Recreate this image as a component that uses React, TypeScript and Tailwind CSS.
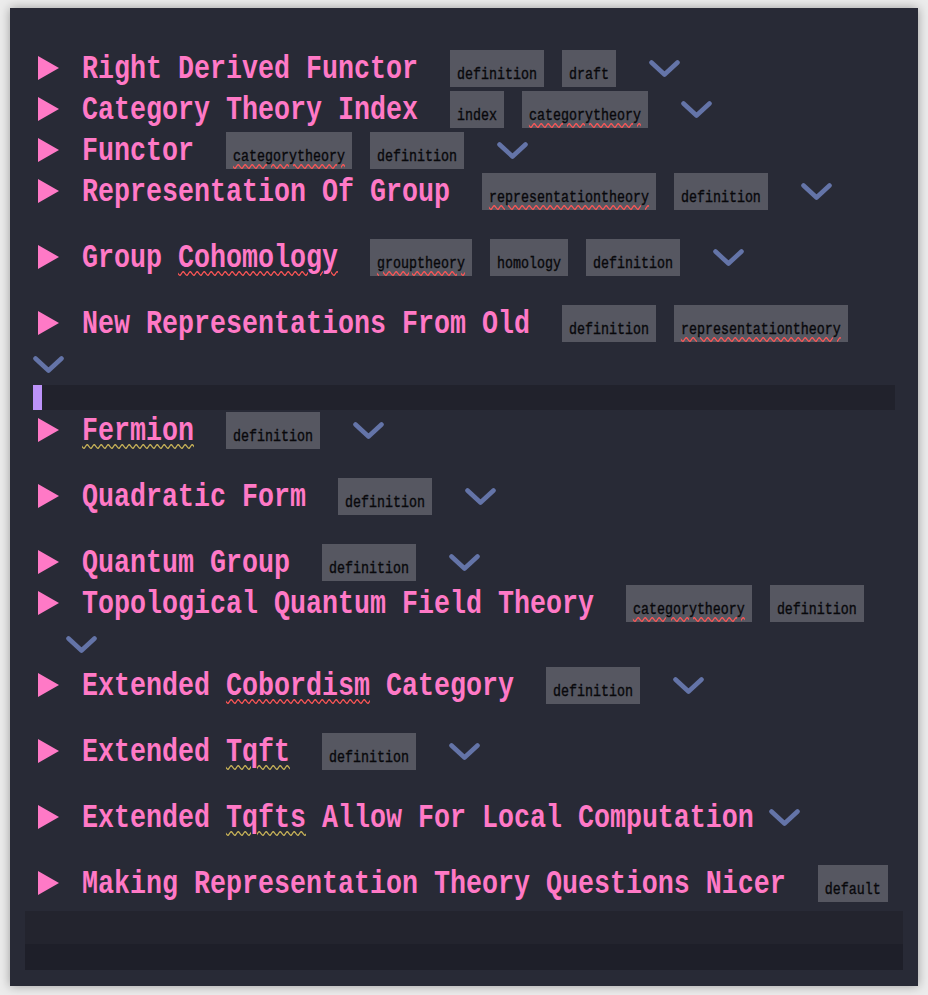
import React from "react";

type Word = { text: string; squiggle?: "red" | "yellow" };
type Tag = { label: string; squiggle?: boolean };
type Row = {
  title: Word[];
  tags: Tag[];
  chevron: "inline" | "wrap0" | "wrap33" | "none";
  gap?: boolean;
};

const rows: Row[] = [
  { title: [{ text: "Right Derived Functor" }], tags: [{ label: "definition" }, { label: "draft" }], chevron: "inline" },
  { title: [{ text: "Category Theory Index" }], tags: [{ label: "index" }, { label: "categorytheory", squiggle: true }], chevron: "inline" },
  { title: [{ text: "Functor" }], tags: [{ label: "categorytheory", squiggle: true }, { label: "definition" }], chevron: "inline" },
  { title: [{ text: "Representation Of Group" }], tags: [{ label: "representationtheory", squiggle: true }, { label: "definition" }], chevron: "inline", gap: true },
  {
    title: [{ text: "Group " }, { text: "Cohomology", squiggle: "red" }],
    tags: [{ label: "grouptheory", squiggle: true }, { label: "homology" }, { label: "definition" }],
    chevron: "inline",
    gap: true,
  },
  { title: [{ text: "New Representations From Old" }], tags: [{ label: "definition" }, { label: "representationtheory", squiggle: true }], chevron: "wrap0" },
];

const rowsAfter: Row[] = [
  { title: [{ text: "Fermion", squiggle: "yellow" }], tags: [{ label: "definition" }], chevron: "inline", gap: true },
  { title: [{ text: "Quadratic Form" }], tags: [{ label: "definition" }], chevron: "inline", gap: true },
  { title: [{ text: "Quantum Group" }], tags: [{ label: "definition" }], chevron: "inline" },
  { title: [{ text: "Topological Quantum Field Theory" }], tags: [{ label: "categorytheory", squiggle: true }, { label: "definition" }], chevron: "wrap33" },
  {
    title: [{ text: "Extended " }, { text: "Cobordism", squiggle: "red" }, { text: " Category" }],
    tags: [{ label: "definition" }],
    chevron: "inline",
    gap: true,
  },
  { title: [{ text: "Extended " }, { text: "Tqft", squiggle: "yellow" }], tags: [{ label: "definition" }], chevron: "inline", gap: true },
  {
    title: [{ text: "Extended " }, { text: "Tqfts", squiggle: "yellow" }, { text: " Allow For Local Computation" }],
    tags: [],
    chevron: "inline",
    gap: true,
  },
  { title: [{ text: "Making Representation Theory Questions Nicer" }], tags: [{ label: "default" }], chevron: "none" },
];

function Chevron({ className = "" }: { className?: string }) {
  return (
    <svg width="31" height="19" viewBox="0 0 31 19" fill="none" className={`shrink-0 ${className}`}>
      <path d="M2.5 3.5L15.5 15.5L28.5 3.5" stroke="#6474a8" strokeWidth="4.6" strokeLinecap="round" strokeLinejoin="round" />
    </svg>
  );
}

function NoteRow({ row }: { row: Row }) {
  return (
    <div className={row.gap ? "mb-[25px]" : ""}>
      <div className="flex h-[41px] items-start">
        <svg width="21" height="24" viewBox="0 0 21 24" className="ml-[5px] mt-[8px] shrink-0">
          <polygon points="0,0 21,12 0,24" fill="#ff79c6" />
        </svg>
        <span className="ml-[23px] mt-[3px] inline-block origin-[0_28px] scale-y-[1.25] whitespace-pre font-['Liberation_Mono',monospace] text-[26.67px] font-bold leading-[41px] text-[#ff79c6]">
          {row.title.map((w, i) => (
            <span
              key={i}
              className={
                w.squiggle === "red"
                  ? "underline decoration-[#ff5555] decoration-wavy decoration-1 underline-offset-[3px]"
                  : w.squiggle === "yellow"
                    ? "underline decoration-[#c9b458] decoration-wavy decoration-1 underline-offset-[3px]"
                    : ""
              }
            >
              {w.text}
            </span>
          ))}
        </span>
        {row.tags.map((t, i) => (
          <span
            key={t.label}
            className={`${i === 0 ? "ml-8" : "ml-[18px]"} mt-[2px] h-[37px] shrink-0 bg-[#565761] px-[7px] pt-[18px]`}
          >
            <span
              className={`block origin-[0_12px] scale-y-[1.3] whitespace-pre font-['Liberation_Mono',monospace] text-[13.33px] leading-[15px] text-[#08080b] [-webkit-text-stroke:0.3px_#08080b] ${
                t.squiggle ? "underline decoration-[#ff5555] decoration-wavy decoration-1 underline-offset-[2px]" : ""
              }`}
            >
              {t.label}
            </span>
          </span>
        ))}
        {row.chevron === "inline" && (
          <Chevron className={row.tags.length ? "ml-[33px] mt-[11px]" : "ml-[15px] mt-[11px]"} />
        )}
      </div>
      {row.chevron === "wrap0" && (
        <div className="flex h-[41px] items-start">
          <Chevron className="mt-[11px]" />
        </div>
      )}
      {row.chevron === "wrap33" && (
        <div className="flex h-[41px] items-start">
          <Chevron className="ml-[33px] mt-[11px]" />
        </div>
      )}
    </div>
  );
}

export default function App() {
  return (
    <div className="min-h-screen bg-[#ececec] pl-[10px] pt-[8px]">
      <div className="flex h-[978px] w-[908px] flex-col bg-[#282a36] px-[23px] pt-[40px] shadow-[0_0_10px_rgba(0,0,0,0.35)]">
        {rows.map((r, i) => (
          <NoteRow key={i} row={r} />
        ))}
        {/* current (empty) line */}
        <div className="flex h-[25px] bg-[#21222c]">
          <div className="w-[9px] bg-[#bd93f9]" />
        </div>
        {rowsAfter.map((r, i) => (
          <NoteRow key={i} row={r} />
        ))}
        <div className="-mx-[8px] mt-[7px] h-[33px] bg-[#23242e]" />
        <div className="-mx-[8px] h-[26px] bg-[#1e1f29]" />
      </div>
    </div>
  );
}
